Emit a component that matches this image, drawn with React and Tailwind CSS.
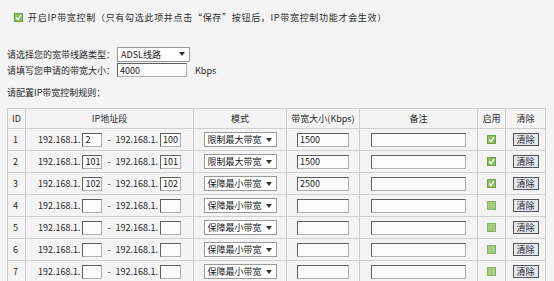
const FONT = { fontFamily: '"Noto Sans CJK SC", "Liberation Sans", sans-serif' };

const ROWS = [
  { id: 1, from: "2", to: "100", mode: "限制最大带宽", bw: "1500", on: true },
  { id: 2, from: "101", to: "101", mode: "限制最大带宽", bw: "1500", on: true },
  { id: 3, from: "102", to: "102", mode: "保障最小带宽", bw: "2500", on: true },
  { id: 4, from: "", to: "", mode: "保障最小带宽", bw: "", on: false },
  { id: 5, from: "", to: "", mode: "保障最小带宽", bw: "", on: false },
  { id: 6, from: "", to: "", mode: "保障最小带宽", bw: "", on: false },
  { id: 7, from: "", to: "", mode: "保障最小带宽", bw: "", on: false },
];

function Check({ on = true }) {
  return (
    <span className={`inline-flex w-[9px] h-[9px] border items-center justify-center ${on ? "bg-[#8fbf62] border-[#6f9f45]" : "bg-[#a3cc80] border-[#86b35f]"}`}>
      {on && (
        <svg width="7" height="7" viewBox="0 0 7 7">
          <path d="M1 3.5 L3 5.5 L6 1" stroke="#ffffff" strokeWidth="1.3" fill="none" />
        </svg>
      )}
    </span>
  );
}

function Box({ w, value = "", h = "h-[14px]" }) {
  return (
    <span
      className={`inline-flex items-center ${w} ${h} bg-[#fbfbfb] border border-t-[#5f5f5f] border-l-[#5f5f5f] border-b-[#b0b0b0] border-r-[#b0b0b0] px-[2px] text-[9px] leading-none text-[#222]`}
    >
      {value}
    </span>
  );
}

function Select({ w, value }) {
  return (
    <span className={`inline-flex items-center justify-between ${w} h-[15px] bg-white border border-[#9a9a9a] pl-[3px] pr-[4px] text-[9px] leading-none text-[#222]`}>
      <span>{value}</span>
      <svg width="6" height="4" viewBox="0 0 6 4">
        <path d="M0 0 H6 L3 4 Z" fill="#333" />
      </svg>
    </span>
  );
}

export default function App() {
  return (
    <div className="w-[554px] h-[281px] overflow-hidden bg-[#f4f4f4] text-[#2a2a2a] text-[9px] leading-none" style={FONT}>
      {/* enable line */}
      <div className="flex items-center pl-[14px] pt-[13px] h-[21px]">
        <Check />
        <span className="ml-[5px] tracking-[0.7px]">开启IP带宽控制（只有勾选此项并点击“保存”按钮后，IP带宽控制功能才会生效）</span>
      </div>

      {/* line settings */}
      <div className="pl-[7px] mt-[26px]">
        <div className="flex items-center h-[14px]">
          <span className="w-[110px]">请选择您的宽带线路类型：</span>
          <Select w="w-[73px]" value="ADSL线路" />
        </div>
        <div className="flex items-center h-[14px] mt-[2px]">
          <span className="w-[110px]">请填写您申请的带宽大小：</span>
          <Box w="w-[70px]" value="4000" />
          <span className="ml-[8px]">Kbps</span>
        </div>
        <div className="mt-[11px]">请配置IP带宽控制规则：</div>
      </div>

      <table className="ml-[7px] mt-[11px] border-collapse table-fixed w-[538px]">
        <colgroup>
          <col className="w-[18px]" />
          <col className="w-[168px]" />
          <col className="w-[93px]" />
          <col className="w-[73px]" />
          <col className="w-[118px]" />
          <col className="w-[28px]" />
          <col className="w-[40px]" />
        </colgroup>
        <thead>
          <tr className="h-[20px]">
            <th className="border border-[#cfcfcf] font-normal text-left pl-[4px]">ID</th>
            <th className="border border-[#cfcfcf] font-normal">IP地址段</th>
            <th className="border border-[#cfcfcf] font-normal">模式</th>
            <th className="border border-[#cfcfcf] font-normal">带宽大小(Kbps)</th>
            <th className="border border-[#cfcfcf] font-normal">备注</th>
            <th className="border border-[#cfcfcf] font-normal">启用</th>
            <th className="border border-[#cfcfcf] font-normal">清除</th>
          </tr>
        </thead>
        <tbody>
          {ROWS.map((r) => (
            <tr key={r.id} className="h-[22px]">
              <td className="border border-[#cfcfcf] pl-[5px]">{r.id}</td>
              <td className="border border-[#cfcfcf]">
                <div className="flex items-center justify-center">
                  <span className="mr-[2px]">192.168.1.</span>
                  <Box w="w-[20px]" value={r.from} />
                  <span className="mx-[5px]">-</span>
                  <span className="mr-[2px]">192.168.1.</span>
                  <Box w="w-[21px]" value={r.to} />
                </div>
              </td>
              <td className="border border-[#cfcfcf]">
                <div className="flex justify-center">
                  <Select w="w-[73px]" value={r.mode} />
                </div>
              </td>
              <td className="border border-[#cfcfcf]">
                <div className="flex justify-center">
                  <Box w="w-[52px]" value={r.bw} />
                </div>
              </td>
              <td className="border border-[#cfcfcf]">
                <div className="flex justify-center">
                  <Box w="w-[95px]" />
                </div>
              </td>
              <td className="border border-[#cfcfcf]">
                <div className="flex justify-center">
                  <Check on={r.on} />
                </div>
              </td>
              <td className="border border-[#cfcfcf]">
                <div className="flex justify-center">
                  <span className="inline-flex items-center justify-center w-[26px] h-[13px] bg-[#e4e8ee] border border-[#555] text-[9px] leading-none">
                    清除
                  </span>
                </div>
              </td>
            </tr>
          ))}
        </tbody>
      </table>
    </div>
  );
}
